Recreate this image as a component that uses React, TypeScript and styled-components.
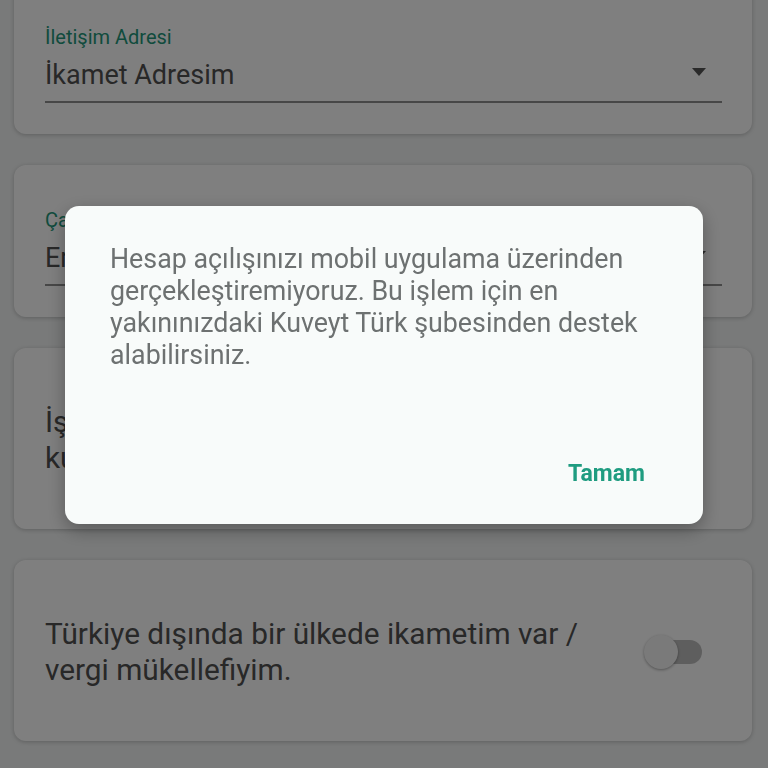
import styled, { createGlobalStyle } from "styled-components";

const GlobalStyle = createGlobalStyle`
  * {
    box-sizing: border-box;
  }
  html, body {
    margin: 0;
    padding: 0;
    background: #f2f4f4;
    font-family: Roboto, "Noto Sans", "Liberation Sans", sans-serif;
    overflow: hidden;
  }
`;

interface SelectFieldProps {
  label: string;
  value: string;
}

function SelectField(props: SelectFieldProps) {
  const { label, value } = props;

  return (
    <Card>
      <FieldLabel>{label}</FieldLabel>
      <FieldRow>
        <FieldValue>{value}</FieldValue>
        <Caret />
      </FieldRow>
    </Card>
  );
}

interface ToggleRowProps {
  text: string;
  checked?: boolean;
}

function ToggleRow(props: ToggleRowProps) {
  const { text, checked = false } = props;

  return (
    <Card $tall>
      <ToggleLine>
        <ToggleText>{text}</ToggleText>
        <Switch $on={checked}>
          <Thumb $on={checked} />
        </Switch>
      </ToggleLine>
    </Card>
  );
}

function App() {
  return (
    <>
      <GlobalStyle />
      <Page>
        <SelectField label="İletişim Adresi" value="İkamet Adresim" />
        <SelectField label="Çalışma Durumu" value="Emekli" />
        <ToggleRow text="İş adresimi tebligat adresi olarak / kullanmak istiyorum." />
        <ToggleRow text="Türkiye dışında bir ülkede ikametim var / vergi mükellefiyim." />
      </Page>

      <Scrim>
        <Dialog>
          <Message>
            Hesap açılışınızı mobil uygulama üzerinden gerçekleştiremiyoruz. Bu
            işlem için en yakınınızdaki Kuveyt Türk şubesinden destek
            alabilirsiniz.
          </Message>
          <Actions>
            <TextButton>Tamam</TextButton>
          </Actions>
        </Dialog>
      </Scrim>
    </>
  );
}

export default App;

const Page = styled.div`
  display: flex;
  flex-direction: column;
  gap: 31px;
  margin-top: -18px;
  padding: 0 16px 40px 14px;
`;

const Card = styled.div<{ $tall?: boolean }>`
  background: #ffffff;
  border-radius: 12px;
  box-shadow: 0 1px 4px rgba(0, 0, 0, 0.22);
  padding: ${(props) => (props.$tall ? "56px 50px 53px 31px" : "43px 30px 31px 31px")};
`;

const FieldLabel = styled.div`
  font-size: 20px;
  line-height: 24px;
  color: #23977a;
  margin-bottom: 10px;
`;

const FieldRow = styled.div`
  display: flex;
  align-items: center;
  justify-content: space-between;
  padding-bottom: 10px;
  border-bottom: 2px solid #8f8f8f;
`;

const FieldValue = styled.span`
  font-size: 27px;
  line-height: 32px;
  color: #505050;
`;

const Caret = styled.span`
  width: 0;
  height: 0;
  margin-right: 16px;
  margin-top: -6px;
  border-left: 7px solid transparent;
  border-right: 7px solid transparent;
  border-top: 8px solid #555555;
`;

const ToggleLine = styled.div`
  display: flex;
  align-items: center;
  justify-content: space-between;
`;

const ToggleText = styled.p`
  margin: 0;
  max-width: 560px;
  font-size: 29.8px;
  line-height: 36px;
  color: #505050;
`;

const Switch = styled.div<{ $on: boolean }>`
  position: relative;
  width: 50px;
  height: 24px;
  border-radius: 12px;
  background: ${(props) => (props.$on ? "#8fd0bd" : "#bdbdbd")};
  flex-shrink: 0;
`;

const Thumb = styled.span<{ $on: boolean }>`
  position: absolute;
  top: -5px;
  left: ${(props) => (props.$on ? "20px" : "-8px")};
  width: 34px;
  height: 34px;
  border-radius: 50%;
  background: #f5f5f5;
  box-shadow: 0 1px 3px rgba(0, 0, 0, 0.35);
`;

const Scrim = styled.div`
  position: fixed;
  inset: 0;
  background: rgba(0, 0, 0, 0.5);
  display: flex;
  justify-content: center;
  align-items: flex-start;
  padding-top: 206px;
`;

const Dialog = styled.div`
  width: 638px;
  height: 318px;
  display: flex;
  flex-direction: column;
  background: #f8fbfa;
  border-radius: 14px;
  box-shadow: 0 6px 18px rgba(0, 0, 0, 0.3);
  padding: 37px 42px 32px 45px;
`;

const Message = styled.p`
  margin: 0;
  font-size: 26.8px;
  line-height: 32px;
  color: #6d7171;
`;

const Actions = styled.div`
  margin-top: auto;
  display: flex;
  justify-content: flex-end;
`;

const TextButton = styled.button`
  border: none;
  background: transparent;
  padding: 6px 16px;
  font-family: Roboto, "Noto Sans", "Liberation Sans", sans-serif;
  font-size: 23px;
  font-weight: 700;
  line-height: 24px;
  color: #1f9c80;
`;
